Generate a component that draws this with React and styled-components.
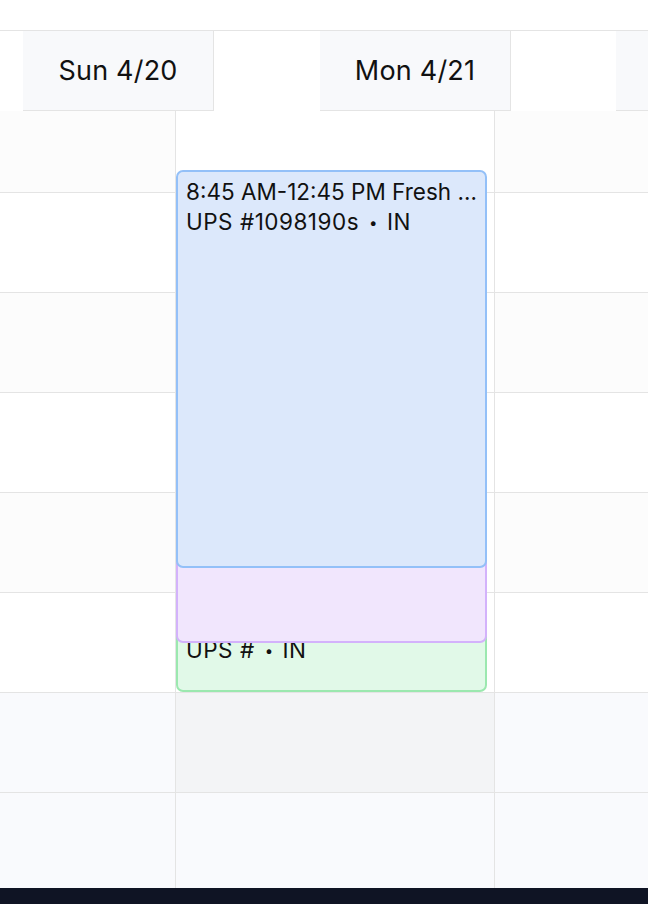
import React from "react";
import styled, { createGlobalStyle } from "styled-components";

const GlobalStyle = createGlobalStyle`
  html, body {
    margin: 0;
    padding: 0;
    background: #ffffff;
    overflow: hidden;
  }
  body {
    font-family: Inter, "Noto Sans", "Liberation Sans", sans-serif;
    color: #111111;
  }
  * { box-sizing: border-box; }
`;

const LINE = "#e4e4e4";

const Page = styled.div`
  width: 648px;
  height: 904px;
  display: flex;
  flex-direction: column;
  overflow: hidden;
  background: #ffffff;
`;

const TopGap = styled.div`
  height: 30px;
  flex: none;
`;

const HeaderRow = styled.div`
  flex: none;
  display: flex;
  height: 81px;
  padding-left: 23px;
  border-top: 1px solid ${LINE};
  overflow: hidden;
`;

const DayHead = styled.div`
  flex: none;
  width: 191px;
  height: 80px;
  display: flex;
  align-items: center;
  justify-content: center;
  background: #f8f9fb;
  border-right: 1px solid ${LINE};
  border-bottom: 1px solid ${LINE};
  font-size: 27px;
  font-weight: 400;
  letter-spacing: 0.2px;
  color: #111111;
  white-space: nowrap;
`;

const HeadGap = styled.div`
  flex: none;
  width: ${(p) => p.$w}px;
`;

const Body = styled.div`
  flex: 1;
  display: flex;
  overflow: hidden;
`;

const Column = styled.div`
  position: relative;
  flex: ${(p) => (p.$w ? "none" : "1")};
  width: ${(p) => (p.$w ? `${p.$w}px` : "auto")};
  display: flex;
  flex-direction: column;
  border-right: ${(p) => (p.$last ? "none" : `1px solid ${LINE}`)};
`;

const TONES = {
  white: "#ffffff",
  shade: "#fcfcfc",
  after: "#f9fafd",
  block: "#f3f4f6",
};

const Slot = styled.div`
  flex: none;
  height: ${(p) => p.$h}px;
  background: ${(p) => TONES[p.$tone]};
  border-bottom: 1px solid ${LINE};
`;

const EVENT_COLORS = {
  blue: { bg: "#dce8fb", border: "#93c0f8" },
  purple: { bg: "#f1e6fd", border: "#d3b2fb" },
  green: { bg: "#e1f9e8", border: "#9be8af" },
};

const EventCard = styled.div`
  position: absolute;
  left: 0;
  width: 311px;
  top: ${(p) => p.$top}px;
  height: ${(p) => p.$h}px;
  z-index: ${(p) => p.$z};
  background: ${(p) => EVENT_COLORS[p.$color].bg};
  border: 2px solid ${(p) => EVENT_COLORS[p.$color].border};
  border-radius: 7px;
  padding: 5px 4px 0 8px;
  overflow: hidden;
  font-size: 22.5px;
  line-height: 30px;
  color: #111111;
`;

const EventLine = styled.div`
  white-space: nowrap;
  overflow: hidden;
  text-overflow: ellipsis;
  letter-spacing: ${(p) => (p.$meta ? "0.5px" : "0")};
`;

const Dot = styled.span`
  display: inline-block;
  margin: 0 9px 0 10px;
  font-size: 15px;
  vertical-align: 2px;
`;

const Footer = styled.div`
  flex: none;
  height: 16px;
  background: #0f1424;
`;

const rowHeights = [82, 100, 100, 100, 100, 100, 100, 100];
const sideTones = ["shade", "white", "shade", "white", "shade", "white", "after", "after"];
const midTones = ["white", "white", "white", "white", "white", "white", "block", "after"];

function Slots({ tones }) {
  return tones.map((t, i) => <Slot key={i} $h={rowHeights[i]} $tone={t} />);
}

function CalendarEvent({ color, top, h, z, title, carrier, direction }) {
  return (
    <EventCard $color={color} $top={top} $h={h} $z={z}>
      <EventLine>{title}</EventLine>
      <EventLine $meta>
        {carrier}
        <Dot>•</Dot>
        {direction}
      </EventLine>
    </EventCard>
  );
}

export default function App() {
  return (
    <>
      <GlobalStyle />
      <Page>
        <TopGap />
        <HeaderRow>
          <DayHead>Sun 4/20</DayHead>
          <HeadGap $w={106} />
          <DayHead>Mon 4/21</DayHead>
          <HeadGap $w={105} />
          <DayHead>Tue 4/22</DayHead>
        </HeaderRow>
        <Body>
          <Column $w={176}>
            <Slots tones={sideTones} />
          </Column>
          <Column $w={319}>
            <Slots tones={midTones} />
            <CalendarEvent
              color="green"
              top={487}
              h={94}
              z={1}
              title="1:00 PM-2:00 PM Fresh Market"
              carrier="UPS #"
              direction="IN"
            />
            <CalendarEvent
              color="purple"
              top={380}
              h={152}
              z={2}
              title="12:00 PM-1:30 PM Fresh Market"
              carrier="UPS #"
              direction="IN"
            />
            <CalendarEvent
              color="blue"
              top={59}
              h={398}
              z={3}
              title="8:45 AM-12:45 PM Fresh Market Deliveries"
              carrier="UPS #1098190s"
              direction="IN"
            />
          </Column>
          <Column $last>
            <Slots tones={sideTones} />
          </Column>
        </Body>
        <Footer />
      </Page>
    </>
  );
}
